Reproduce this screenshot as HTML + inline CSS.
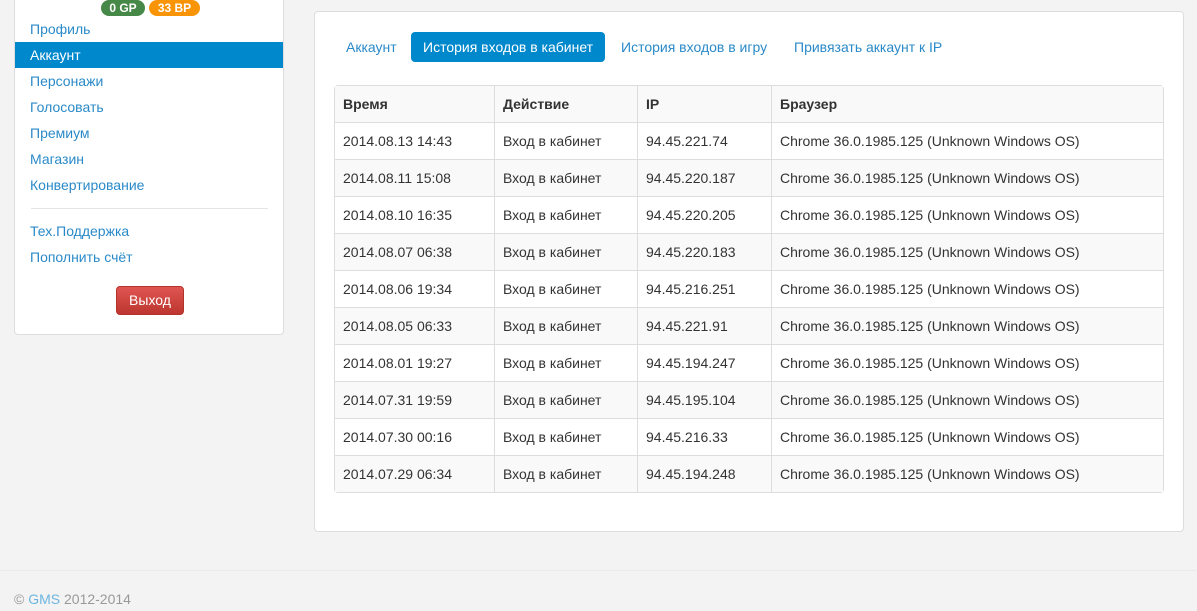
<!DOCTYPE html>
<html><head><meta charset="utf-8"><style>
*{box-sizing:border-box;margin:0;padding:0}
body{width:1197px;height:611px;overflow:hidden;background:#f3f3f3;font-family:"Liberation Sans",Arial,sans-serif;font-size:14px;color:#333;position:relative}
.side{position:absolute;left:14px;top:-6px;width:270px;height:341px;background:#fff;border:1px solid #ddd;border-radius:4px}
.badge{position:absolute;top:5px;height:16px;border-radius:8px;color:#fff;font-weight:bold;font-size:12px;line-height:16px;text-align:center}
.nav a{position:absolute;left:0;width:268px;height:26px;line-height:26px;padding-left:15px;color:#2a8ac8;text-decoration:none}
.nav a.act{background:#0088cc;color:#fff}
.hr{position:absolute;left:16px;width:237px;top:213px;border-top:1px solid #e5e5e5}
.btn{position:absolute;left:101px;top:291px;width:68px;height:29px;border-radius:4px;background:linear-gradient(#e05552,#bd362f);border:1px solid #b3322c;color:#fff;text-align:center;line-height:27px}
.main{position:absolute;left:314px;top:11px;width:870px;height:521px;background:#fff;border:1px solid #ddd;border-radius:4px}
.tab{position:absolute;top:20px;height:30px;line-height:30px;color:#2a8ac8;font-size:14px}
.tab.act{background:#0088cc;color:#fff;border-radius:4px;padding:0 12px}
table{position:absolute;left:19px;top:73px;width:830px;border-collapse:separate;border-spacing:0;border:1px solid #ddd;border-radius:4px}
td,th{height:37px;padding:0 8px;border-left:1px solid #ddd;border-top:1px solid #ddd;text-align:left;white-space:nowrap}
th{height:36px}
tr td:first-child,tr th:first-child{border-left:0}
th{border-top:0;background:#f9f9f9;font-weight:bold}
tr:nth-child(odd) td{background:#f9f9f9}
.foot{position:absolute;left:0;right:0;top:570px;border-top:1px solid #eaeaea}
.copy{position:absolute;left:14px;top:591px;color:#999}
</style></head><body>
<div class="side">
<div class="badge" style="left:86px;width:44px;background:#468847">0 GP</div>
<div class="badge" style="left:134px;width:51px;background:#f89406">33 BP</div>
<div class="nav">
<a style="top:21px">Профиль</a>
<a class="act" style="top:47px">Аккаунт</a>
<a style="top:73px">Персонажи</a>
<a style="top:99px">Голосовать</a>
<a style="top:125px">Премиум</a>
<a style="top:151px">Магазин</a>
<a style="top:177px">Конвертирование</a>
<div class="hr"></div>
<a style="top:223px">Тех.Поддержка</a>
<a style="top:249px">Пополнить счёт</a>
</div>
<div class="btn">Выход</div>
</div>
<div class="main">
<div class="tab" style="left:31px">Аккаунт</div>
<div class="tab act" style="left:96px">История входов в кабинет</div>
<div class="tab" style="left:306px">История входов в игру</div>
<div class="tab" style="left:479px">Привязать аккаунт к IP</div>
<table>
<colgroup><col style="width:159px"><col style="width:143px"><col style="width:134px"><col></colgroup>
<tr><th>Время</th><th>Действие</th><th>IP</th><th>Браузер</th></tr>
<tr><td>2014.08.13 14:43</td><td>Вход в кабинет</td><td>94.45.221.74</td><td>Chrome 36.0.1985.125 (Unknown Windows OS)</td></tr>
<tr><td>2014.08.11 15:08</td><td>Вход в кабинет</td><td>94.45.220.187</td><td>Chrome 36.0.1985.125 (Unknown Windows OS)</td></tr>
<tr><td>2014.08.10 16:35</td><td>Вход в кабинет</td><td>94.45.220.205</td><td>Chrome 36.0.1985.125 (Unknown Windows OS)</td></tr>
<tr><td>2014.08.07 06:38</td><td>Вход в кабинет</td><td>94.45.220.183</td><td>Chrome 36.0.1985.125 (Unknown Windows OS)</td></tr>
<tr><td>2014.08.06 19:34</td><td>Вход в кабинет</td><td>94.45.216.251</td><td>Chrome 36.0.1985.125 (Unknown Windows OS)</td></tr>
<tr><td>2014.08.05 06:33</td><td>Вход в кабинет</td><td>94.45.221.91</td><td>Chrome 36.0.1985.125 (Unknown Windows OS)</td></tr>
<tr><td>2014.08.01 19:27</td><td>Вход в кабинет</td><td>94.45.194.247</td><td>Chrome 36.0.1985.125 (Unknown Windows OS)</td></tr>
<tr><td>2014.07.31 19:59</td><td>Вход в кабинет</td><td>94.45.195.104</td><td>Chrome 36.0.1985.125 (Unknown Windows OS)</td></tr>
<tr><td>2014.07.30 00:16</td><td>Вход в кабинет</td><td>94.45.216.33</td><td>Chrome 36.0.1985.125 (Unknown Windows OS)</td></tr>
<tr><td>2014.07.29 06:34</td><td>Вход в кабинет</td><td>94.45.194.248</td><td>Chrome 36.0.1985.125 (Unknown Windows OS)</td></tr>
</table>
</div>
<div class="foot"></div>
<div class="copy">© <span style="color:#6bb6e0">GMS</span> 2012-2014</div>
</body></html>
